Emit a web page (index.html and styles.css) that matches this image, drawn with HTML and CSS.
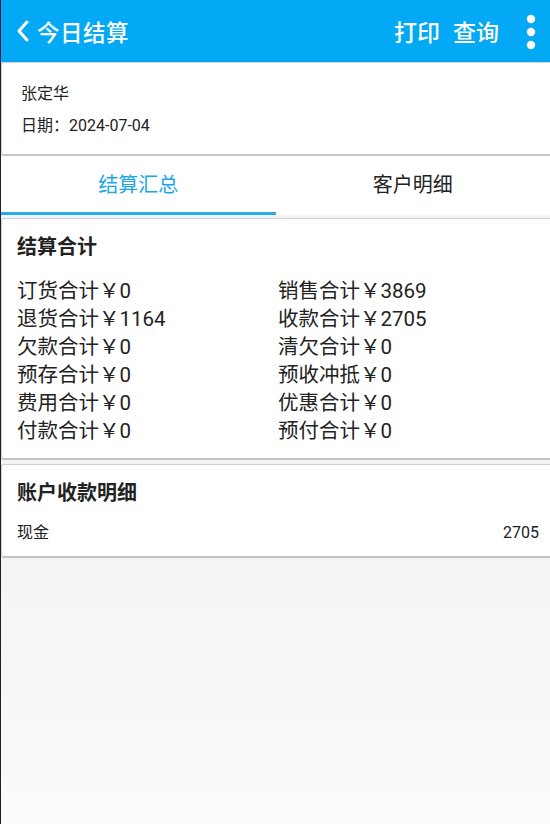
FILE: index.html
```html
<!DOCTYPE html>
<html lang="zh-CN">
<head>
<meta charset="utf-8">
<title>今日结算</title>
<link rel="stylesheet" href="styles.css">
</head>
<body>
<header class="topbar">
  <div class="back">
    <svg class="chev" width="14" height="22" viewBox="0 0 14 22"><path d="M11 2 L3 11 L11 20" fill="none" stroke="#fff" stroke-width="3" stroke-linecap="round" stroke-linejoin="round"/></svg>
    <span class="title">今日结算</span>
  </div>
  <div class="actions">
    <span class="act">打印</span>
    <span class="act">查询</span>
    <svg class="more" width="10" height="36" viewBox="0 0 10 36"><circle cx="5" cy="5" r="4.2" fill="#fff"/><circle cx="5" cy="18" r="4.2" fill="#fff"/><circle cx="5" cy="31" r="4.2" fill="#fff"/></svg>
  </div>
</header>

<section class="card info">
  <div class="info-line">张定华</div>
  <div class="info-line">日期：2024-07-04</div>
</section>

<nav class="tabs">
  <div class="tab active">结算汇总</div>
  <div class="tab">客户明细</div>
</nav>

<section class="card summary">
  <h2 class="card-title">结算合计</h2>
  <div class="grid">
    <div class="cell">订货合计￥0</div>
    <div class="cell">销售合计￥3869</div>
    <div class="cell">退货合计￥1164</div>
    <div class="cell">收款合计￥2705</div>
    <div class="cell">欠款合计￥0</div>
    <div class="cell">清欠合计￥0</div>
    <div class="cell">预存合计￥0</div>
    <div class="cell">预收冲抵￥0</div>
    <div class="cell">费用合计￥0</div>
    <div class="cell">优惠合计￥0</div>
    <div class="cell">付款合计￥0</div>
    <div class="cell">预付合计￥0</div>
  </div>
</section>

<section class="card account">
  <h2 class="card-title">账户收款明细</h2>
  <div class="acc-row"><span>现金</span><span>2705</span></div>
</section>
</body>
</html>
```

FILE: styles.css
```css
* { box-sizing: border-box; }
html, body { margin: 0; padding: 0; }
body {
  width: 550px;
  min-height: 824px;
  border-left: 1px solid #1e1e3c;
  font-family: Roboto, "Noto Sans CJK SC", sans-serif;
  color: #222;
  background: linear-gradient(to bottom, #f4f4f4 0, #f4f4f4 560px, #fbfbfb 824px);
}
.topbar {
  height: 62px;
  background: #03a9f4;
  display: flex;
  align-items: center;
  justify-content: space-between;
  color: #fff;
  padding: 0 14px 0 15px;
}
.back { display: flex; align-items: center; }
.chev { display: block; margin-right: 7px; }
.title { font-size: 22.5px; font-weight: 500; letter-spacing: 0.5px; }
.actions { display: flex; align-items: center; }
.act { font-size: 23px; font-weight: 500; margin-left: 13px; }
.more { display: block; margin-left: 27px; margin-top: 2px; }

.card {
  background: #fff;
  border: 1px solid #d0d0d0;
  border-right: none;
  border-bottom: 2px solid #c4c4c4;
  border-radius: 3px 0 0 3px;
}
.info {
  height: 94px;
  padding: 15px 19px 0;
}
.info-line { font-size: 16px; line-height: 32px; }

.tabs {
  display: flex;
  background: #fff;
  height: 59px;
}
.tab {
  flex: 1;
  height: 59px;
  text-align: center;
  font-size: 20px;
  line-height: 28px;
  padding-top: 15px;
  border-bottom: 3px solid transparent;
}
.tab.active { color: #1aa7e6; border-bottom-color: #29abe2; }

.summary {
  margin-top: 3px;
  padding: 13px 0 13px 15px;
}
.card-title {
  margin: 0;
  font-size: 20px;
  font-weight: 700;
  line-height: 30px;
}
.grid {
  display: grid;
  grid-template-columns: 261px 1fr;
  margin-top: 15px;
}
.cell { font-size: 20.5px; line-height: 28px; }

.account {
  margin-top: 4px;
  padding: 13px 11px 8px 15px;
}
.acc-row {
  display: flex;
  justify-content: space-between;
  font-size: 16px;
  line-height: 30px;
  margin-top: 10px;
}
```
